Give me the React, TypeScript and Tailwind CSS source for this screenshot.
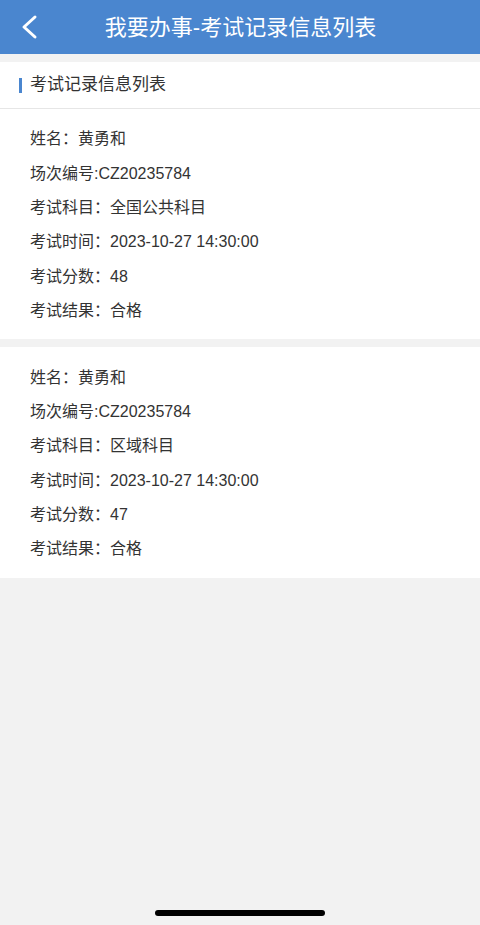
import React from "react";

type ExamRecord = {
    name: string;
    sessionNo: string;
    subject: string;
    time: string;
    score: number;
    result: string;
};

const RECORDS: ExamRecord[] = [
    { name: "黄勇和", sessionNo: "CZ20235784", subject: "全国公共科目", time: "2023-10-27 14:30:00", score: 48, result: "合格" },
    { name: "黄勇和", sessionNo: "CZ20235784", subject: "区域科目", time: "2023-10-27 14:30:00", score: 47, result: "合格" },
];

const FONT = "font-['Liberation_Sans','Noto_Sans_CJK_SC',sans-serif]";

function Row({ children }: { children: React.ReactNode }) {
    return <div className="h-[34.4px] flex items-center text-[16px] text-[#333333]">{children}</div>;
}

function RecordCard({ r }: { r: ExamRecord }) {
    return (
        <div className="bg-white px-[30px] pt-[13px] pb-[11px]">
            <Row>姓名：{r.name}</Row>
            <Row>场次编号:{r.sessionNo}</Row>
            <Row>考试科目：{r.subject}</Row>
            <Row>考试时间：{r.time}</Row>
            <Row>考试分数：{r.score}</Row>
            <Row>考试结果：{r.result}</Row>
        </div>
    );
}

export default function App() {
    return (
        <div className={`${FONT} h-[925px] w-[480px] bg-[#f2f2f2] flex flex-col overflow-hidden`}>
            {/* Nav bar */}
            <div className="h-[54px] bg-[#4a86cf] flex items-center relative shrink-0">
                <svg className="absolute left-[18px] top-[13px]" width="24" height="28" viewBox="0 0 24 28" fill="none">
                    <path d="M17 4 L6 14 L17 24" stroke="white" strokeWidth="3" strokeLinecap="round" strokeLinejoin="round" />
                </svg>
                <div className="flex-1 text-center text-white text-[22px] pl-px">我要办事-考试记录信息列表</div>
            </div>

            <div className="h-[8px] shrink-0" />

            {/* Section header */}
            <div className="h-[47px] bg-white border-b border-[#e6e6e6] flex items-center shrink-0">
                <div className="ml-[19px] w-[3px] h-[15px] bg-[#4a86cf]" />
                <span className="ml-[8px] text-[17px] text-[#333333]">考试记录信息列表</span>
            </div>

            <div className="flex flex-col gap-[8px]">
                {RECORDS.map((r, i) => (
                    <RecordCard key={i} r={r} />
                ))}
            </div>

            <div className="flex-1" />

            {/* Home indicator */}
            <div className="flex justify-center pb-[9px]">
                <div className="w-[170px] h-[6px] rounded-full bg-black" />
            </div>
        </div>
    );
}
